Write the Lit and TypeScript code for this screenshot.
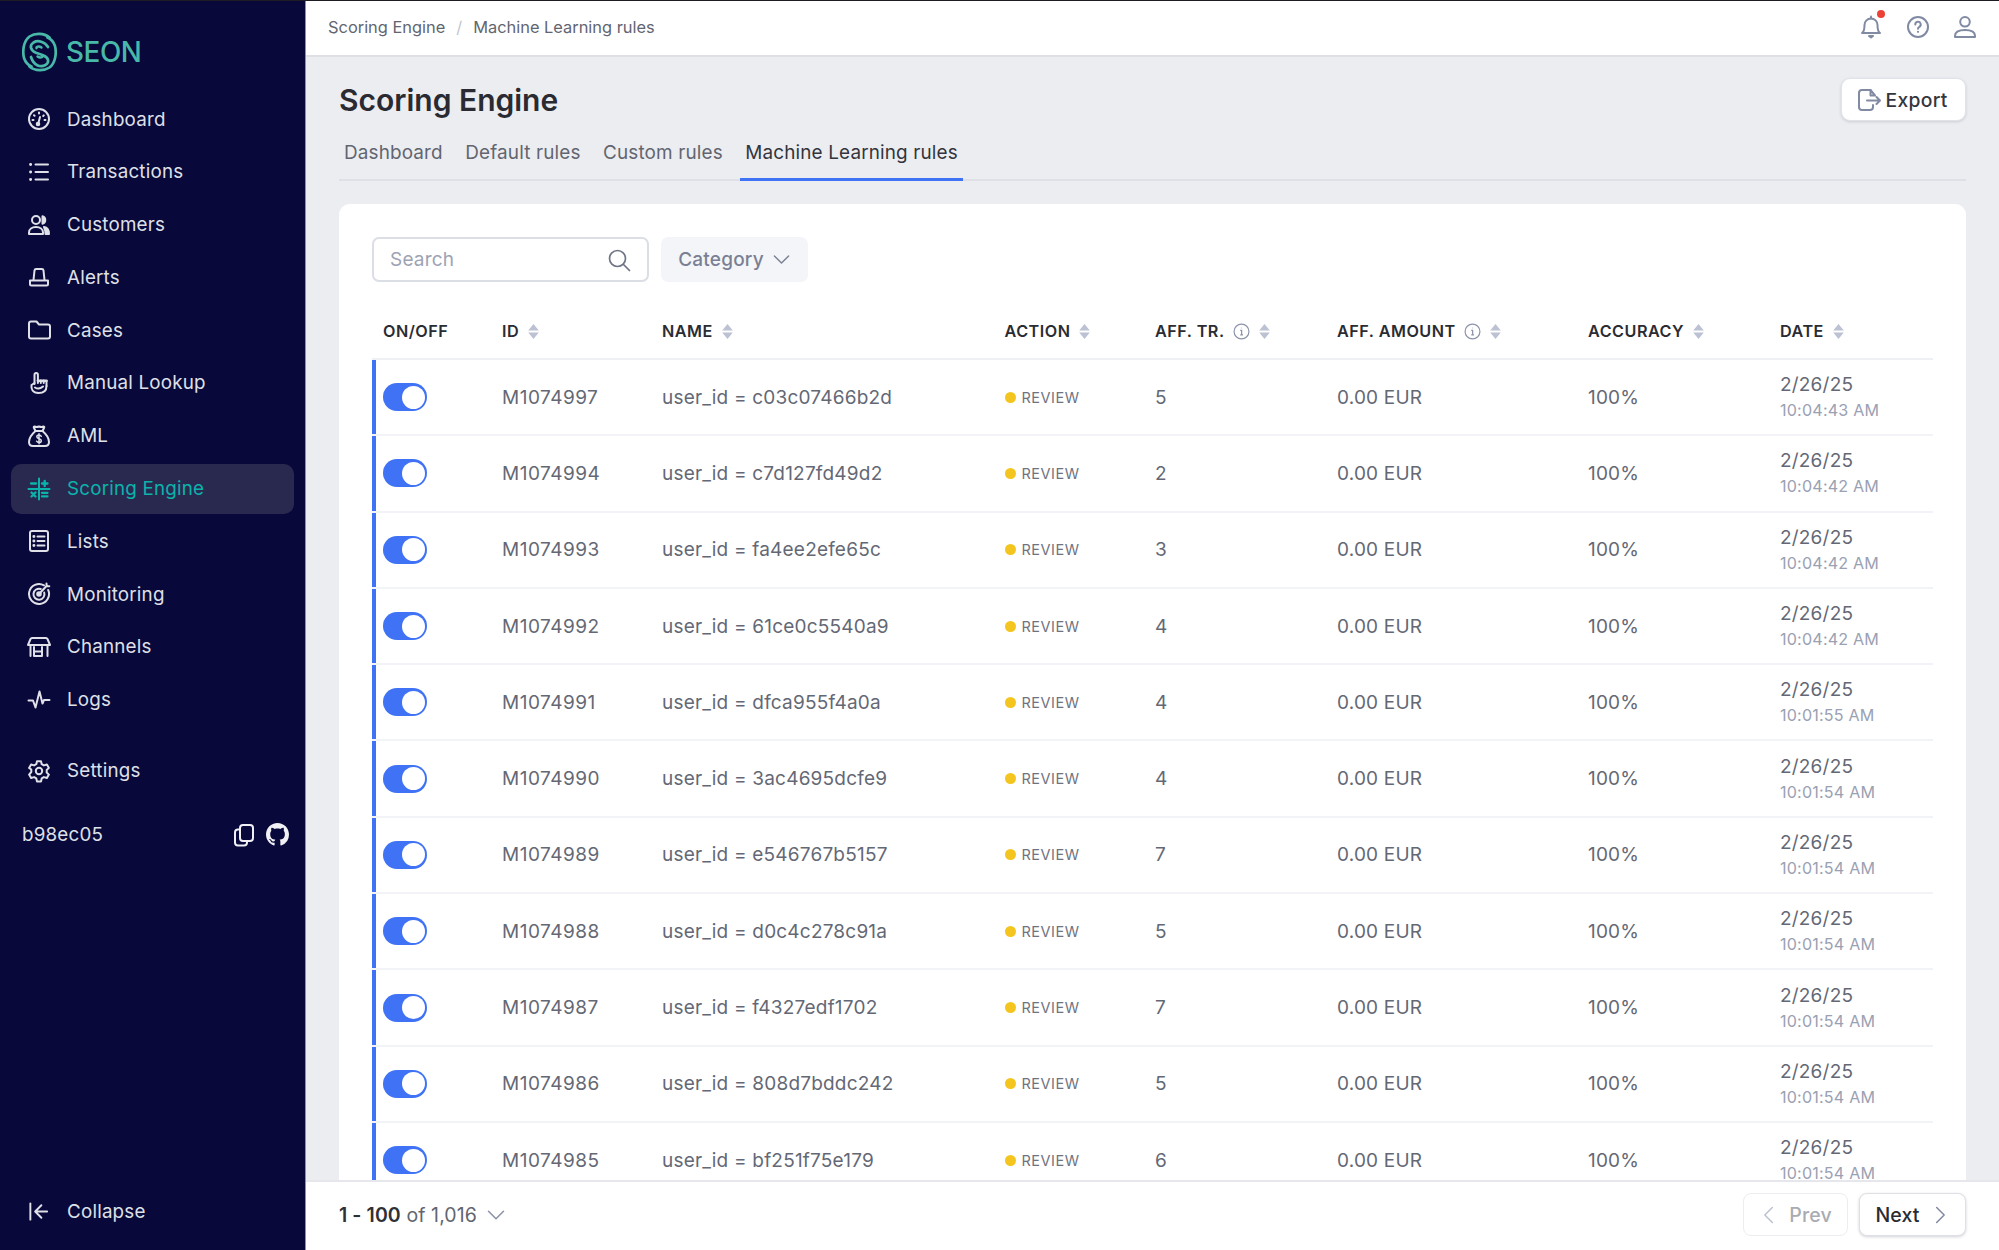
import { LitElement, html, css, svg } from "lit";
import { customElement } from "lit/decorators.js";

const ic = (body: unknown, size = 24, sw = 2) => html`<svg class="ic" width=${size} height=${size} viewBox="0 0 24 24" fill="none" stroke="currentColor" stroke-width=${sw} stroke-linecap="round" stroke-linejoin="round">${body}</svg>`;

const icons: Record<string, unknown> = {
  dashboard: svg`<circle cx="12" cy="12" r="10"/><path d="M13 10 11 17.500"/><circle cx="11" cy="17" r="1.300" fill="currentColor"/><path d="M7 8.200l.6.6M12 5.500v1M16.800 8.400l-.6.6M5.500 13h1M17.500 13h1"/>`,
  list: svg`<path d="M8.500 4.500H21M8.500 12H21M8.500 19.500H21"/><path d="M3.500 4.500h.2M3.500 12h.2M3.500 19.500h.2" stroke-width="2.800"/>`,
  customers: svg`<circle cx="9" cy="7" r="4"/><path d="M2 21v-1.500C2 16 5 14 9 14s7 2 7 5.500V21Z"/><path d="M15.500 3.200a4 4 0 0 1 0 7.600Z" fill="currentColor"/><path d="M17 14c3 .5 5 2.500 5 7h-3.500c0-2.500-.5-5-1.500-7Z" fill="currentColor"/>`,
  alerts: svg`<path d="M6.500 15 7.500 5.500Q7.700 4 9.200 4h5.600q1.500 0 1.700 1.500l1 9.500"/><path d="M3 15.500h18v3.500q0 1.500-1.500 1.500h-15Q3 20.500 3 19Z"/>`,
  cases: svg`<path d="M2 5.500Q2 3.500 4 3.500h5.500l2.500 3h9q2 0 2 2v10q0 2-2 2H4q-2 0-2-2Z"/>`,
  lookup: svg`<path d="M7.500 13V3.800a1.700 1.700 0 0 1 3.400 0V9"/><path d="M10.900 9.500v2.500M13.800 9.500v2.500M16.700 9.500v2.500M19.500 10v5"/><path d="M10.900 9.800h8.600" stroke-width="2.600"/><path d="M7.500 12 4.500 14c-.5 4 1 8 7 8 5.500 0 8-3 8-7"/><path d="M8 16.500q4 2.500 8-1"/>`,
  aml: svg`<path d="M8.500 7 6.800 3.500q-.3-1 .7-1 2 1 4.500 0 2.500 1 4.500 0 1 0 .7 1L15.500 7"/><path d="M8.500 7h7"/><path d="M8.500 7C5 10 2 14 2 18q0 4 4 4h12q4 0 4-4c0-4-3-8-6.500-11"/><path d="M14.300 12.300Q13.500 11 12 11q-2.200 0-2.200 1.800c0 2.500 4.500 1.400 4.500 3.900Q14.300 18.500 12 18.500q-1.600 0-2.400-1.300M12 9.800v9.900" stroke-width="1.500"/>`,
  scoring: svg`<path d="M12 1.500v21M1.500 12h21"/><path d="M4 6.500h5M15 6.500h5.500M17.700 3.800v5.400M15 15.800h5.500M15 19.300h5.500M4.500 15.500l4 4M8.500 15.500l-4 4" stroke-width="2.300"/>`,
  lists: svg`<rect x="3" y="2" width="18" height="20" rx="2"/><path d="M10.500 7.500h7M10.500 12h7M10.500 16.500h7"/><path d="M6.800 7.500h.2M6.800 12h.2M6.800 16.500h.2" stroke-width="2.800"/>`,
  monitoring: svg`<path d="M17 3.300A10 10 0 1 0 21.200 8"/><path d="M13.800 7A5.500 5.500 0 1 0 17.200 10.500"/><path d="M12 12l8-8.500M19.500 1.500v2.800h2.800"/><circle cx="12" cy="12" r="1.800" fill="currentColor"/>`,
  channels: svg`<path d="M5 3h14q1 0 1.500 1L23 10H1l2.500-6Q4 3 5 3Z"/><path d="M3.500 10v11M20.500 10v11M7 12v9h8v-9M7 16.500h8"/>`,
  logs: svg`<path d="M1.500 12.500H6l2.500 7L12.500 3.500l3 12 1.500-3.500h5.500"/>`,
  settings: svg`<circle cx="12" cy="12" r="3.200"/><path d="M10 2.200h4l.7 3 2.200 1.200 3-.9 2 3.400-2.200 2.100v2.500l2.200 2.100-2 3.400-3-.9-2.200 1.300-.7 3h-4l-.7-3-2.200-1.300-3 .9-2-3.400L4.300 13v-2.500L2.100 8.900l2-3.400 3 .9 2.200-1.200Z"/>`,
  collapse: svg`<path d="M3.500 3.500v17M21 12H9M15 5.500 8.500 12l6.500 6.500"/>`,
  copy: svg`<rect x="8" y="2" width="13" height="16" rx="3"/><path d="M8 6.500H6Q3 6.500 3 9.500v10q0 3 3 3h6q3 0 3-3V18"/>`,
  bell: svg`<path d="M12 3.500a6.500 6.500 0 0 0-6.500 6.500c0 5-1 7-2.500 8h18c-1.500-1-2.500-3-2.500-8A6.500 6.500 0 0 0 12 3.500Z"/><path d="M12 1.500v2"/><path d="M10 21h4l-2 1.500Z" fill="currentColor"/>`,
  help: svg`<circle cx="12" cy="12" r="10"/><path d="M9.300 9.500a2.700 2.700 0 1 1 4 2.300c-.9.500-1.300 1-1.300 2"/><path d="M12 16.800h.01" stroke-width="2.200"/>`,
  user: svg`<circle cx="12" cy="6.800" r="4.800"/><path d="M2 22v-1c0-3.500 3-6 10-6s10 2.500 10 6v1Z"/>`,
  exportIc: svg`<path d="M13.500 2H5Q2 2 2 5v14q0 3 3 3h8q3 0 3-3v-2"/><path d="M13.500 2 18 7.500h-4.500Z"/><path d="M10 12.500H23M19.500 9 23 12.500 19.500 16"/>`,
  search: svg`<circle cx="10.500" cy="10.500" r="8"/><path d="m16.500 16.500 6 6"/>`,
  down: svg`<path d="M3 7.500 12 16.500 21 7.500"/>`,
  left: svg`<path d="M16 3 7 12l9 9"/>`,
  right: svg`<path d="M8 3l9 9-9 9"/>`,
};

const github = html`<svg class="ic" width="23" height="23" viewBox="0 0 16 16" fill="currentColor"><path d="M8 0C3.580 0 0 3.580 0 8c0 3.540 2.290 6.530 5.470 7.590.4.070.55-.17.55-.38 0-.19-.01-.82-.01-1.490-2.010.37-2.530-.49-2.690-.94-.09-.23-.48-.94-.82-1.130-.28-.15-.68-.52-.01-.53.63-.01 1.080.58 1.230.82.720 1.210 1.870.87 2.330.66.070-.52.280-.87.510-1.070-1.780-.2-3.640-.89-3.640-3.950 0-.87.310-1.590.820-2.150-.08-.2-.36-1.020.08-2.120 0 0 .67-.21 2.200.82.640-.18 1.320-.27 2-.27s1.360.09 2 .27c1.530-1.040 2.200-.82 2.200-.82.440 1.100.160 1.920.080 2.120.510.560.820 1.270.820 2.150 0 3.070-1.870 3.750-3.650 3.950.290.250.540.730.540 1.480 0 1.070-.01 1.930-.01 2.200 0 .21.150.46.550.38A8.010 8.010 0 0 0 16 8c0-4.420-3.580-8-8-8Z"/></svg>`;

const info = html`<svg class="info" width="17" height="17" viewBox="0 0 16 16" fill="none" stroke="currentColor" stroke-width="1.100"><circle cx="8" cy="8" r="7"/><path d="M6.800 7h1.300v4M6.800 11.200h2.600M8 4.400v.6" stroke-width="1.200"/></svg>`;

const sort = html`<svg class="sort" width="13" height="17" viewBox="0 0 12 16" fill="currentColor"><path d="M6 1 11 7H1ZM6 15 1 9h10Z"/></svg>`;

const nav: [string, string][] = [
  ["Dashboard", "dashboard"], ["Transactions", "list"], ["Customers", "customers"], ["Alerts", "alerts"],
  ["Cases", "cases"], ["Manual Lookup", "lookup"], ["AML", "aml"], ["Scoring Engine", "scoring"],
  ["Lists", "lists"], ["Monitoring", "monitoring"], ["Channels", "channels"], ["Logs", "logs"],
];

const rows: [string, string, string, string][] = [
  ["M1074997", "c03c07466b2d", "5", "10:04:43 AM"],
  ["M1074994", "c7d127fd49d2", "2", "10:04:42 AM"],
  ["M1074993", "fa4ee2efe65c", "3", "10:04:42 AM"],
  ["M1074992", "61ce0c5540a9", "4", "10:04:42 AM"],
  ["M1074991", "dfca955f4a0a", "4", "10:01:55 AM"],
  ["M1074990", "3ac4695dcfe9", "4", "10:01:54 AM"],
  ["M1074989", "e546767b5157", "7", "10:01:54 AM"],
  ["M1074988", "d0c4c278c91a", "5", "10:01:54 AM"],
  ["M1074987", "f4327edf1702", "7", "10:01:54 AM"],
  ["M1074986", "808d7bddc242", "5", "10:01:54 AM"],
  ["M1074985", "bf251f75e179", "6", "10:01:54 AM"],
];

@customElement("app-root")
export class AppRoot extends LitElement {
  static styles = css`
    :host { display: block; width: 1999px; height: 1250px; overflow: hidden; font-family: Inter, "Liberation Sans", sans-serif; }
    * { box-sizing: border-box; }
    .ic, .info, .sort { display: block; flex: none; }
    .app { display: flex; height: 1250px; border-top: 1px solid #1c1c22; background: #ecedf1; }
    .side { width: 306px; flex: none; background: #08083a; border-right: 1px solid #8e90a8; color: #dfe0e8; display: flex; flex-direction: column; padding: 0 11px; }
    .logo { display: flex; align-items: center; height: 93px; padding: 9px 0 0 11px; gap: 9px; color: #48b9a9; font-size: 27.800px; font-weight: 500; letter-spacing: -0.400px; }
    .nav { display: flex; flex-direction: column; gap: 2.800px; }
    .item { display: flex; align-items: center; gap: 16px; height: 50px; padding-left: 16px; font-size: 18.800px; letter-spacing: 0.200px; border-radius: 10px; }
    .item.active { background: #292950; color: #0ab4ab; }
    .settings { margin-top: 21px; }
    .ver { display: flex; align-items: center; justify-content: space-between; margin-top: 14px; padding: 0 5px 0 11px; height: 50px; font-size: 18.800px; letter-spacing: 0.200px; }
    .ver-ic { display: flex; gap: 10px; align-items: center; color: #f0f0f5; }
    .collapse { margin-top: auto; margin-bottom: 14px; gap: 17px; }
    .main { flex: 1; min-width: 0; display: flex; flex-direction: column; }
    .top { height: 56px; flex: none; background: #fff; border-bottom: 2px solid #dfe0e5; display: flex; align-items: center; justify-content: space-between; padding: 0 22px 2px 22px; font-size: 16.400px; color: #62656f; }
    .crumbs { display: flex; gap: 11px; }
    .crumbs i { font-style: normal; color: #c3c6d0; }
    .top-ic { display: flex; gap: 23px; color: #818aa3; }
    .bell { position: relative; }
    .dot { position: absolute; right: -2px; top: -5px; width: 8px; height: 8px; border-radius: 50%; background: #ea4335; }
    .content { flex: 1; min-height: 0; overflow: hidden; padding: 21px 33px 0 33px; }
    .head { display: flex; justify-content: space-between; align-items: center; height: 43px; }
    h1 { margin: 0; font-size: 30px; font-weight: 600; color: #2a2b32; }
    .export { display: flex; align-items: center; gap: 4.500px; height: 43px; width: 125px; padding-left: 15px; background: #fff; border-radius: 9px; border: 1px solid #e2e3e8; box-shadow: 0 1px 3px rgba(30,35,60,.16); font-size: 19.300px; font-weight: 500; color: #35363d; letter-spacing: .3px; }
    .export .ic { color: #818aa3; }
    .tabs { height: 60px; display: flex; align-items: flex-end; border-bottom: 2px solid #dfe0e5; gap: 12.500px; }
    .tab { height: 51px; display: flex; align-items: center; padding: 0 5px 3px; margin-bottom: -2px; font-size: 18.900px; letter-spacing: .15px; color: #62656f; border-bottom: 3px solid transparent; }
    .tab.active { color: #33343c; border-bottom-color: #3f72f5; }
    .card { margin-top: 23px; background: #fff; border-radius: 11px; padding: 33px 33px 0; }
    .tools { display: flex; gap: 12px; height: 45px; }
    .search { width: 277px; display: flex; align-items: center; justify-content: space-between; padding: 0 16px; border: 2px solid #dcdee6; border-radius: 7px; font-size: 19px; color: #9da3b4; letter-spacing: .2px; }
    .search .ic { color: #6f7486; }
    .cat { width: 147px; display: flex; align-items: center; justify-content: center; gap: 8px; background: #f4f5f8; border-radius: 7px; font-size: 19px; letter-spacing: .2px; color: #7a8094; font-weight: 500; }
    .grid { display: grid; grid-template-columns: 130px 160px 342.500px 150.500px 182px 251px 192px 153px; align-items: center; }
    .th { height: 78px; padding-top: 22px; border-bottom: 2px solid #eff0f4; font-size: 16.200px; font-weight: 600; letter-spacing: .5px; color: #2b2c33; }
    .th > div { display: flex; align-items: center; gap: 8px; }
    .th > div:first-child { padding-left: 11px; }
    .sort { color: #bcc2d4; }
    .info { color: #8d94aa; }
    .row { border-bottom: 2px solid #f2f3f6; }
    .cells { height: 74.300px; border-left: 4px solid #3f72f5; grid-template-columns: 126px 160px 342.500px 150.500px 182px 251px 192px 153px; font-size: 19px; letter-spacing: .2px; color: #646875; }
    .id { letter-spacing: .5px; }
    .tg { margin-left: 7px; width: 44px; height: 28px; border-radius: 14px; background: #3f72f5; position: relative; }
    .tg::after { content: ""; position: absolute; right: 2.500px; top: 2.500px; width: 23px; height: 23px; border-radius: 50%; background: #fff; }
    .act { display: flex; align-items: center; gap: 6px; font-size: 14.500px; letter-spacing: .5px; color: #6f7380; }
    .act b { width: 11px; height: 11px; border-radius: 50%; background: #f4c51f; }
    .date { display: flex; flex-direction: column; gap: 5px; line-height: 21px; }
    .time { font-size: 16.100px; color: #9aa1b3; letter-spacing: .2px; line-height: 20px; }
    .foot { height: 70px; flex: none; background: #fff; border-top: 2px solid #e6e7ec; display: flex; align-items: center; justify-content: space-between; padding: 0 33px 3px; font-size: 19.500px; letter-spacing: .1px; color: #62656f; }
    .range { display: flex; align-items: center; gap: 6px; }
    .range b { color: #2f3036; font-weight: 600; }
    .range .ic { color: #8a91a6; margin-left: 3px; }
    .pager { display: flex; gap: 11px; }
    .btn { height: 43px; display: flex; align-items: center; justify-content: center; gap: 10px; border-radius: 8px; background: #fff; font-size: 19.500px; font-weight: 500; }
    .prev { width: 105px; border: 1px solid #ecedf1; color: #a9abb3; }
    .prev .ic { color: #bcc1d0; }
    .next { width: 107px; border: 1px solid #dfe0e5; box-shadow: 0 1px 3px rgba(30,35,60,.2); color: #2a2b32; }
    .next .ic { color: #818aa3; }
  `;

  private head(label: string, withInfo = false) {
    return html`<div><span>${label}</span>${withInfo ? info : ""}${sort}</div>`;
  }

  render() {
    return html`<div class="app">
      <aside class="side">
        <div class="logo">
          <svg class="ic" width="35" height="40" viewBox="0 0 35 40" fill="none" stroke="currentColor" stroke-width="2.700" stroke-linecap="round">
            <path d="M27.500 5.500C22 .8 13 .8 7.500 4.500 1.500 9 .3 19 2 26 3.500 30.500 6.500 33.300 9.500 34.500"/>
            <path d="M7.500 34.500C13 39.200 22 39.200 27.500 35.500 33.500 31 34.700 21 33 14 31.500 9.500 28.500 6.700 25.500 5.500"/>
            <path d="M26 15C23 9.500 16 7.800 11.500 10.500 7 13.500 8.500 18.500 14 20.700L21 23.300C26.500 25.500 28 30 23.500 33 19 35.500 12 34.500 9 25"/>
            <path d="M19.500 15.500C17 13.800 14 14.500 14.500 16.200M15.500 24.500C18 26.200 21 25.500 20.500 23.800" stroke-width="2.400"/>
          </svg>
          <span>SEON</span>
        </div>
        <nav class="nav">
          ${nav.map(([label, icon]) => html`<div class="item ${label === "Scoring Engine" ? "active" : ""}">${ic(icons[icon], 24)}<span>${label}</span></div>`)}
        </nav>
        <div class="item settings">${ic(icons.settings, 24)}<span>Settings</span></div>
        <div class="ver"><span>b98ec05</span><div class="ver-ic">${ic(icons.copy, 24)}${github}</div></div>
        <div class="item collapse">${ic(icons.collapse, 23)}<span>Collapse</span></div>
      </aside>
      <div class="main">
        <header class="top">
          <div class="crumbs"><span>Scoring Engine</span><i>/</i><span>Machine Learning rules</span></div>
          <div class="top-ic">
            <div class="bell">${ic(icons.bell, 24)}<span class="dot"></span></div>
            ${ic(icons.help, 24)}
            ${ic(icons.user, 24)}
          </div>
        </header>
        <section class="content">
          <div class="head">
            <h1>Scoring Engine</h1>
            <div class="export">${ic(icons.exportIc, 24)}<span>Export</span></div>
          </div>
          <div class="tabs">
            <div class="tab">Dashboard</div><div class="tab">Default rules</div><div class="tab">Custom rules</div><div class="tab active">Machine Learning rules</div>
          </div>
          <div class="card">
            <div class="tools">
              <div class="search"><span>Search</span>${ic(icons.search, 24, 1.700)}</div>
              <div class="cat"><span>Category</span>${ic(icons.down, 19, 1.800)}</div>
            </div>
            <div class="grid th">
              <div><span>ON/OFF</span></div>
              ${this.head("ID")}${this.head("NAME")}${this.head("ACTION")}${this.head("AFF. TR.", true)}${this.head("AFF. AMOUNT", true)}${this.head("ACCURACY")}${this.head("DATE")}
            </div>
            ${rows.map(([id, name, n, time]) => html`<div class="row"><div class="grid cells">
              <div><div class="tg"></div></div>
              <div class="id">${id}</div>
              <div>user_id = ${name}</div>
              <div class="act"><b></b><span>REVIEW</span></div>
              <div>${n}</div>
              <div>0.00 EUR</div>
              <div>100%</div>
              <div class="date"><span>2/26/25</span><span class="time">${time}</span></div>
            </div></div>`)}
          </div>
        </section>
        <footer class="foot">
          <div class="range"><span><b>1 - 100</b> of 1,016</span>${ic(icons.down, 20, 1.800)}</div>
          <div class="pager">
            <div class="btn prev">${ic(icons.left, 20, 1.800)}<span>Prev</span></div>
            <div class="btn next"><span>Next</span>${ic(icons.right, 20, 1.800)}</div>
          </div>
        </footer>
      </div>
    </div>`;
  }
}
